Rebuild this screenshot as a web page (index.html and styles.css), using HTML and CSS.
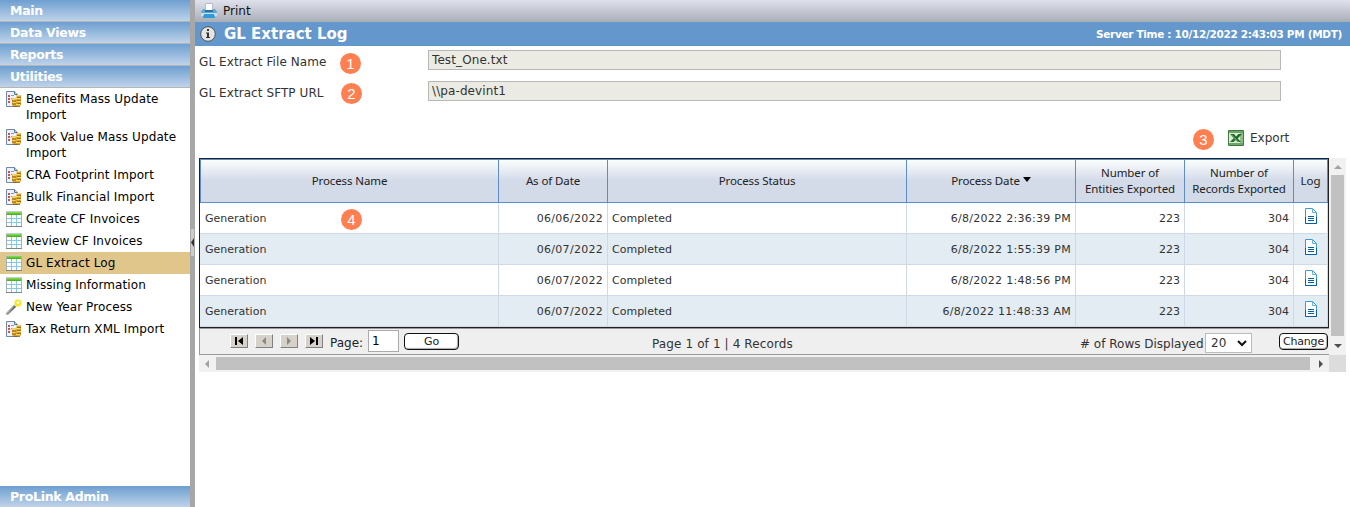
FILE: index.html
```html
<!DOCTYPE html>
<html lang="en">
<head>
    <meta charset="UTF-8">
    <meta name="viewport" content="width=device-width, initial-scale=1.0">
    <title>GL Extract Log</title>
    <link rel="stylesheet" href="styles.css">
</head>
<body>

    <!-- Shared icons -->
    <svg class="defs">
        <defs>
            <linearGradient id="gridTop" x1="0" y1="0" x2="0" y2="1">
                <stop offset="0" stop-color="#8be050"/>
                <stop offset="1" stop-color="#3faa18"/>
            </linearGradient>
            <linearGradient id="wandBar" x1="0" y1="1" x2="1" y2="0">
                <stop offset="0" stop-color="#999"/>
                <stop offset="1" stop-color="#555"/>
            </linearGradient>
            <symbol id="import" viewBox="0 0 16 16">
                <path d="M.5.5h8l3 3v12H.5z" fill="#eef2f8" stroke="#7088a8"/>
                <path d="M8.5.5v3h3" fill="#c5d6ec" stroke="#5578a6"/>
                <path d="M2 4h2v2H2zM2 7h2v2H2zM2 10h2v2H2z" fill="#c4574a"/>
                <path d="M5 4.500h3M5 7.500h1" stroke="#8497b4"/>
                <path d="M10.500 4h4l.5 1v9l-1 1h-3.500zM6 7.500h4.500V15H7l-1-1z" fill="#dba52f"/>
                <path d="M11 4.500h3M10 7.500h4M11 10.500h4M10 13.500h4M6.500 8.500h3M6.500 11.500h3" stroke="#fbd965"/>
                <path d="M11 6.500h4M11 9.500h4M11 12.500h4M6 10h4M6 13h4M7 15.500h7" stroke="#8c5f1b" stroke-width=".8"/>
            </symbol>
            <symbol id="grid" viewBox="0 0 16 16">
                <path d="M.5.5h15v15H.5z" fill="#fafcfd" stroke="#a9b0b3"/>
                <path d="M0 0h16v1H0z" fill="#c8d0c6"/>
                <path d="M1 1h14v3H1z" fill="url(#gridTop)"/>
                <path d="M1 7.500h14M1 11.500h14M5.500 4v11M10.500 4v11" stroke="#86c9e6"/>
                <path d="M0 15.500h16" stroke="#7f8588"/>
            </symbol>
            <symbol id="wand" viewBox="0 0 16 16">
                <path d="M1.500 14.500 9.500 6.500" stroke="url(#wandBar)" stroke-width="2.800" stroke-linecap="round"/>
                <path d="m1.500 13.700 8-8" stroke="#c5c5c5" stroke-width=".8"/>
                <circle cx="12" cy="4" r="4" fill="#fff68a"/>
                <circle cx="12" cy="4" r="3" fill="#f6e21c"/>
                <circle cx="12" cy="3.600" r="1.500" fill="#fffde0"/>
            </symbol>
            <symbol id="doc" viewBox="0 0 12 16">
                <path d="M.5.5h7l4 4v11H.5z" fill="#fff" stroke="#3a9ad5"/>
                <path d="M7.500.5v4h4" fill="none" stroke="#62b2e3"/>
                <path d="M3 8.500h6M3 10.500h6M3 12.500h6" stroke="#075fa8"/>
                <path d="M.5 9v6.500h11V9" fill="none" stroke="#075fa8"/>
            </symbol>
        </defs>
    </svg>

    <div class="page">
        <nav class="sidebar">
            <a class="menu">Main</a>
            <a class="menu">Data Views</a>
            <a class="menu">Reports</a>
            <a class="menu">Utilities</a>
            <ul class="items">
                <li><svg><use href="#import"/></svg><span>Benefits Mass Update<br>Import</span></li>
                <li><svg><use href="#import"/></svg><span>Book Value Mass Update<br>Import</span></li>
                <li><svg><use href="#import"/></svg><span>CRA Footprint Import</span></li>
                <li><svg><use href="#import"/></svg><span>Bulk Financial Import</span></li>
                <li><svg><use href="#grid"/></svg><span>Create CF Invoices</span></li>
                <li><svg><use href="#grid"/></svg><span>Review CF Invoices</span></li>
                <li class="active"><svg><use href="#grid"/></svg><span>GL Extract Log</span></li>
                <li><svg><use href="#grid"/></svg><span>Missing Information</span></li>
                <li><svg><use href="#wand"/></svg><span>New Year Process</span></li>
                <li><svg><use href="#import"/></svg><span>Tax Return XML Import</span></li>
            </ul>
            <a class="menu bottom">ProLink Admin</a>
        </nav>

        <div class="splitter">
            <svg class="handle" viewBox="0 0 3 27"><path d="M3 9v9L0 13.500z" fill="#333"/></svg>
        </div>

        <main>
            <div class="toolbar">
                <svg class="printer" viewBox="0 0 16 16">
                    <path d="M4.500.5h7V8h-7z" fill="#fafcff" stroke="#b5bdc8"/>
                    <path d="M2 6h2v3h8V6h2l2 3v4H0V9z" fill="#5ba7d6"/>
                    <path d="M4 7h8v2H4z" fill="#266f9f"/>
                    <path d="M0 10h16v3H0z" fill="#d3dde6"/>
                    <path d="M3 11h10l1 4H2z" fill="#2d9bd7"/>
                </svg>
                <span>Print</span>
            </div>

            <header class="title">
                <svg viewBox="0 0 16 16">
                    <circle cx="8" cy="8" r="7.300" fill="#e4e4e2" stroke="#555"/>
                    <path d="M7 3h2v2H7zM6 6.500h3V11h1v1H6v-1h1V7.500H6z" fill="#333"/>
                </svg>
                <h1>GL Extract Log</h1>
                <span class="time">Server Time : 10/12/2022 2:43:03 PM (MDT)</span>
            </header>

            <form class="fields">
                <div class="field">
                    <label for="fileName">GL Extract File Name</label>
                    <b class="pin">1</b>
                    <input type="text" id="fileName" value="Test_One.txt" readonly>
                </div>
                <div class="field">
                    <label for="sftpUrl">GL Extract SFTP URL</label>
                    <b class="pin pin-url">2</b>
                    <input type="text" id="sftpUrl" value="\\pa-devint1" readonly>
                </div>
            </form>

            <div class="export">
                <b class="pin">3</b>
                <svg viewBox="0 0 16 16">
                    <path d="M.5.5h15v15H.5z" fill="#dcebd8" stroke="#3d7a3c"/>
                    <path d="M1 1h14v2H1zM1 13h14v2H1z" fill="#6fa468"/>
                    <path d="M12 3h3v10h-3z" fill="#8fbd86"/>
                    <path d="M2 4h4l2 2.500L10.500 4H14L9.700 8.500 13 12H9.500L7.500 10l-2 2H2l3.700-3.700z" fill="#1f6b28"/>
                    <path d="M3 4.500 10.500 12" stroke="#8cc585"/>
                </svg>
                <span>Export</span>
            </div>

            <div class="scroller">
                <div class="content">
                    <table>
                        <colgroup>
                            <col class="c-name"><col class="c-num"><col class="c-status"><col class="c-date"><col class="c-num"><col class="c-num"><col class="c-log">
                        </colgroup>
                        <thead>
                            <tr>
                                <th>Process Name</th>
                                <th>As of Date</th>
                                <th>Process Status</th>
                                <th>Process Date<svg class="sort" viewBox="0 0 8 5"><path d="M0 0h8L4 5z"/></svg></th>
                                <th>Number of<br>Entities Exported</th>
                                <th>Number of<br>Records Exported</th>
                                <th>Log</th>
                            </tr>
                        </thead>
                        <tbody>
                            <tr>
                                <td><div class="name">Generation<b class="pin">4</b></div></td><td class="date">06/06/2022</td><td>Completed</td><td class="date">6/8/2022 2:36:39 PM</td>
                                <td class="right">223</td><td class="right">304</td><td class="log"><svg><use href="#doc"/></svg></td>
                            </tr>
                            <tr>
                                <td>Generation</td><td class="date">06/07/2022</td><td>Completed</td><td class="date">6/8/2022 1:55:39 PM</td>
                                <td class="right">223</td><td class="right">304</td><td class="log"><svg><use href="#doc"/></svg></td>
                            </tr>
                            <tr>
                                <td>Generation</td><td class="date">06/07/2022</td><td>Completed</td><td class="date">6/8/2022 1:48:56 PM</td>
                                <td class="right">223</td><td class="right">304</td><td class="log"><svg><use href="#doc"/></svg></td>
                            </tr>
                            <tr>
                                <td>Generation</td><td class="date">06/07/2022</td><td>Completed</td><td class="date">6/8/2022 11:48:33 AM</td>
                                <td class="right">223</td><td class="right">304</td><td class="log"><svg><use href="#doc"/></svg></td>
                            </tr>
                        </tbody>
                    </table>

                    <div class="pager">
                        <div class="nav">
                            <button class="step"><svg viewBox="0 0 10 8"><path d="M1 0h2v8H1zM9 0v8L4 4z"/></svg></button>
                            <button class="step off"><svg viewBox="0 0 10 8"><path d="M7 0v8L3 4z"/></svg></button>
                            <button class="step off"><svg viewBox="0 0 10 8"><path d="M3 0v8l4-4z"/></svg></button>
                            <button class="step"><svg viewBox="0 0 10 8"><path d="M1 0v8l5-4zM7 0h2v8H7z"/></svg></button>
                            <label for="page">Page:</label>
                            <input type="text" id="page" value="1">
                            <button class="btn go">Go</button>
                        </div>
                        <div class="summary">Page 1 of 1 | 4 Records</div>
                        <div class="rows">
                            <span># of Rows Displayed</span>
                            <div class="select">20<svg viewBox="0 0 10 7"><path d="m1 1 4 4 4-4" fill="none" stroke="#111" stroke-width="2"/></svg></div>
                            <button class="btn change">Change</button>
                        </div>
                    </div>
                </div>

                <div class="vbar">
                    <svg viewBox="0 0 8 4"><path d="M0 4h8L4 0z" fill="#a3a3a3"/></svg>
                    <div class="thumb"></div>
                    <svg viewBox="0 0 8 4"><path d="M0 0h8L4 4z" fill="#505050"/></svg>
                </div>
                <div class="hbar">
                    <svg viewBox="0 0 4 8"><path d="M4 0v8L0 4z" fill="#a3a3a3"/></svg>
                    <div class="thumb"></div>
                    <svg viewBox="0 0 4 8"><path d="M0 0v8l4-4z" fill="#505050"/></svg>
                </div>
                <div class="corner"></div>
            </div>
        </main>
    </div>

</body>
</html>
```

FILE: styles.css
```css
* {
    box-sizing: border-box;
}
body {
    margin: 0;
    background: #fff;
    color: #333;
    font-family: Verdana, "DejaVu Sans", sans-serif;
    font-size: 12px;
    overflow: hidden;
}
svg {
    display: block;
    flex: none;
}
.defs {
    position: absolute;
    width: 0;
    height: 0;
}
.page {
    display: flex;
    height: 507px;
}

/* Sidebar */
.sidebar {
    display: flex;
    flex-direction: column;
    width: 190px;
}
.menu {
    flex: none;
    height: 22px;
    padding-left: 10px;
    background: linear-gradient(#6d9fd0, #bfd3ea);
    border-bottom: 1px solid #b5b5b5;
    color: #fff;
    font-size: 12.5px;
    font-weight: bold;
    line-height: 21px;
    letter-spacing: -0.3px;
}
.bottom {
    height: 21px;
    margin-top: auto;
    border: 0;
}
.items {
    margin: 0;
    padding: 0;
    list-style: none;
    color: #000;
    letter-spacing: 0.1px;
}
.items li {
    display: flex;
    gap: 4px;
    padding: 3px 0 3px 6px;
    line-height: 16px;
    white-space: nowrap;
}
.items svg {
    width: 16px;
    height: 16px;
}
.items .active {
    background: #e1c68c;
}
.splitter {
    display: flex;
    align-items: center;
    width: 5px;
    padding-left: 1px;
    background: #a7a7a7;
}
.handle {
    width: 3px;
    height: 27px;
    margin-top: -22px;
    background: #ccc;
}

/* Top bars */
main {
    width: 1155px;
}
.toolbar {
    display: flex;
    align-items: center;
    gap: 6px;
    height: 22px;
    padding-left: 6px;
    background: linear-gradient(#dfe2ec, #a9adb7);
    color: #111;
}
.printer {
    width: 16px;
    height: 16px;
}
.title {
    display: flex;
    align-items: center;
    height: 24px;
    padding: 0 8px 0 5px;
    background: #6497cb;
    color: #fff;
}
.title svg {
    width: 16px;
    height: 16px;
}
h1 {
    margin: 0 0 0 8px;
    font-size: 15px;
}
.time {
    margin-left: auto;
    font-size: 10.5px;
    font-weight: bold;
    letter-spacing: -0.32px;
}

/* Read-only fields */
.fields {
    display: flex;
    flex-direction: column;
    gap: 11px;
    padding: 4px 0 0 4px;
}
.field {
    display: flex;
    height: 20px;
}
.field label {
    width: 141px;
    padding-top: 5px;
    letter-spacing: 0.08px;
}
.field input {
    width: 853px;
    height: 20px;
    margin-left: auto;
    margin-right: 69px;
    padding: 0 3px;
    border: 1px solid #b7b9b9;
    background: #ebebe3;
    color: #333;
    font: inherit;
    letter-spacing: 0.1px;
}
.pin {
    display: flex;
    align-items: center;
    justify-content: center;
    flex: none;
    width: 21px;
    height: 21px;
    margin-top: 3px;
    border-radius: 50%;
    background: #ff7f50;
    color: #fff;
    font: 15px "Liberation Sans", sans-serif;
}
.pin-url {
    margin-left: 1px;
    margin-top: 2px;
}
.export {
    display: flex;
    align-items: center;
    height: 57px;
    padding: 16px 0 0 998px;
}
.export .pin {
    margin-top: 3px;
}
.export svg {
    width: 16px;
    height: 16px;
    margin: 0 6px 0 14px;
}

/* Scrolling list */
.scroller {
    display: grid;
    grid-template-columns: 1130px 17px;
    grid-template-rows: 197px 17px;
    width: 1147px;
    margin-left: 4px;
}
table {
    width: 1130px;
    border: 1px solid #222;
    border-spacing: 0;
    table-layout: fixed;
    font-size: 11px;
}
.c-name {
    width: 299px;
}
.c-num {
    width: 109px;
}
.c-status {
    width: 299px;
}
.c-date {
    width: 169px;
}
.c-log {
    width: 34px;
}
th {
    height: 44px;
    padding: 0;
    border: 1px solid #5b8ccb;
    border-left: 0;
    background: linear-gradient(#fbfefe, #d3dae8 50%);
    color: #222;
    font: 11.5px/16px "Noto Sans", sans-serif;
    letter-spacing: -0.1px;
}
th:first-child {
    border-left: 1px solid #5b8ccb;
}
.sort {
    display: inline-block;
    width: 8px;
    height: 5px;
    margin: 0 0 3px 3px;
}
td {
    height: 31px;
    padding: 0 4px;
    border: solid #d0d9e8;
    border-width: 0 1px 1px 0;
}
td:first-child {
    padding-left: 5px;
}
tr:nth-child(even) td {
    background: #e2ecf2;
}
.right, .date {
    text-align: right;
}
.date {
    letter-spacing: 0.28px;
}
.name {
    display: flex;
    align-items: center;
    justify-content: space-between;
    padding-right: 132px;
}
.name .pin {
    margin-top: 2px;
}
.log svg {
    width: 12px;
    height: 16px;
    margin: -4px auto 0;
}

/* Pager */
.pager {
    display: grid;
    grid-template-columns: 452px 1fr 249px;
    grid-template-rows: 25px;
    height: 27px;
    border: solid #999;
    border-width: 1px 0 1px 1px;
    background: #efefef;
    white-space: nowrap;
}
.nav {
    display: flex;
    align-items: center;
    padding-left: 30px;
}
.step {
    display: flex;
    align-items: center;
    justify-content: center;
    width: 18px;
    height: 14px;
    margin: 0 7px 1px 0;
    padding: 0;
    border: solid;
    border-width: 1px;
    border-color: #fff #808080 #808080 #fff;
    background: #d6d2ca;
}
.step svg {
    width: 10px;
    height: 8px;
}
.off svg {
    fill: #888;
}
.nav label {
    padding-top: 3px;
    color: #222;
}
.nav input {
    width: 31px;
    height: 22px;
    margin: -1px 5px 0 5px;
    padding: 0 3px 1px;
    border: 1px solid #aaa;
    font: inherit;
}
.btn {
    height: 17px;
    padding: 0;
    border: 1px solid #111;
    border-radius: 4px;
    background: #fff;
    box-shadow: inset -1px -1px 1px #aaa;
    color: #222;
    font: 11px/14px Verdana, "DejaVu Sans", sans-serif;
}
.go {
    width: 55px;
}
.summary {
    padding-top: 8px;
    letter-spacing: 0.12px;
}
.rows {
    display: flex;
    align-items: center;
}
.rows span {
    width: 122px;
    padding-top: 4px;
}
.select {
    display: flex;
    align-items: center;
    justify-content: space-between;
    width: 47px;
    height: 20px;
    margin: 3px 27px 0 3px;
    padding: 0 4px 0 5px;
    border: 1px solid #bbb;
    background: #fff;
}
.select svg {
    width: 10px;
    height: 7px;
}
.change {
    width: 49px;
    letter-spacing: -0.2px;
}

/* Scrollbars */
.vbar, .hbar {
    display: flex;
    align-items: center;
    background: #f1f1f1;
}
.vbar {
    flex-direction: column;
    padding: 7px 0;
}
.vbar svg {
    width: 8px;
    height: 4px;
}
.vbar .thumb {
    width: 13px;
    height: 161px;
    margin: 6px 0 auto;
    background: #c1c1c1;
}
.hbar {
    padding: 0 6px;
}
.hbar svg {
    width: 4px;
    height: 8px;
}
.hbar .thumb {
    width: 1094px;
    height: 13px;
    margin: 0 auto 0 7px;
    background: #c1c1c1;
}
.corner {
    background: #dcdcdc;
}
```
